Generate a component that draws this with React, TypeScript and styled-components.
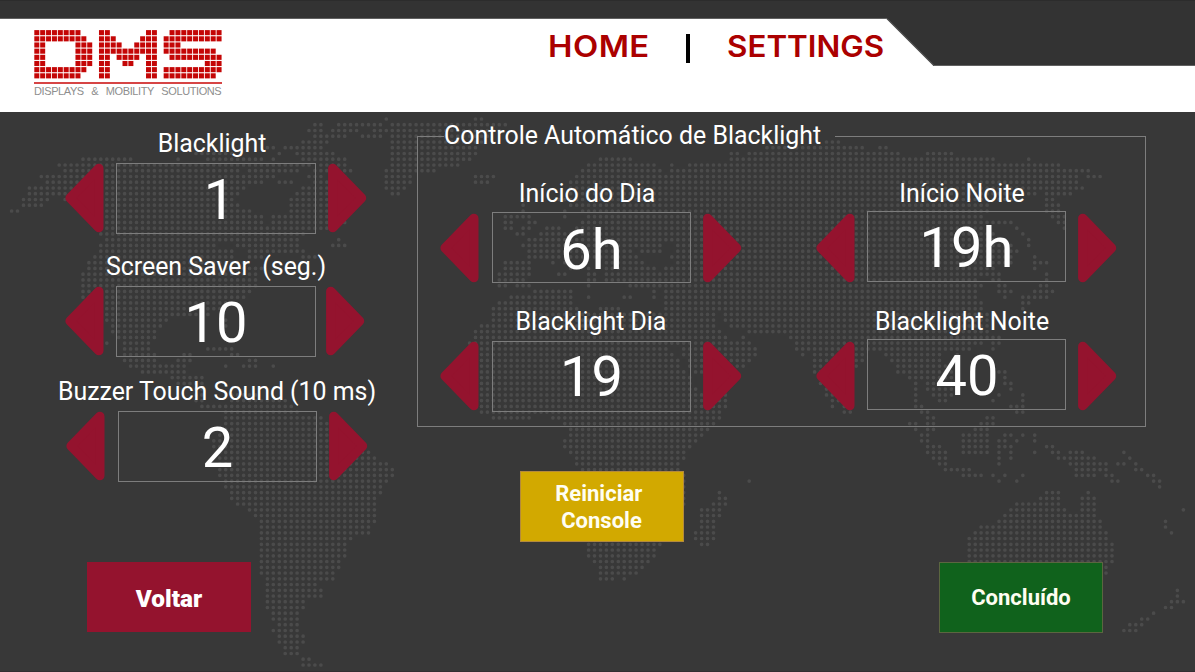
import React from "react";
import styled, { createGlobalStyle } from "styled-components";

const GlobalStyle = createGlobalStyle`
  *, *::before, *::after { box-sizing: border-box; }
  body { margin: 0; background: #383838; }
`;

const crimson = "#94132e";

/* ---------- dotted world map ---------- */

const STEP_X = 5.948;
const STEP_Y = 5.747;
const ORIGIN_X = 11.6;
const ORIGIN_Y = 119;

/* one line per row of dots: "from-to" spans of land, in px */
const LAND = `
387 476-482
315-321 339-381 393-506
309-321 333-357 375-387 393-500
315-345 363-381 393-490
303-327 393-483 826-838
268-273 286-291 297-321 393-477 767-862 880-886
196-232 280 297-333 393-476 733-739 751-898 928-952
83-131 178 208-250 256-261 273 303-345 393-470 602-632 733-993 1028
59-261 268-310 321-345 393-458 590-656 673 691-1058
65-240 250-297 315-351 387-434 584-661 673-1088
41-273 309-321 339-345 387-410 476-494 578-1077 1088-1100
47-261 280-291 315-327 387-410 476-488 572-1077
29-244 303-327 387-404 572-1082
29-240 297-327 393-399 572-1034 1045-1071
23-47 65-234 291-327 523 560-1010 1047-1053
23-35 41 107-238 291-327 523 572-985 1047-1058
12-17 107-250 291-327 523 565 584-985 1047-1058
107-262 273-327 506-529 565 590-981 1053-1064
107-262 273-345 506-512 529-535 584-1012 1058-1064
107-327 506-512 523-529 547-560 578-981 1017 1064
100-303 517-523 541-992 1022
107-297 339 529-999 1028
101-214 238-297 333-345 523-661 679-1010 1028
101-232 250-303 529-632 644-661 679-1017
95-232 250-262 303-315 529-560 572-637 673-1010 1035
89-244 506-529 553 565-570 607-640 679-1011 1035-1047
89-262 506-529 570 589 607-655 668-995 1035
83-256 500-529 560-566 589-595 607-999 1047
83-256 500-523 589-595 607-975 993-999 1047
83-256 500-506 517-530 589 630-981 999-1005 1041-1047
83-250 535-572 656 668-976 999-1011 1035-1053
83-244 512-572 589 626-632 656 668-976 1005 1023-1047
107-226 500-572 668-982 1023-1028
107-220 494-578 602-620 668-982 1023
107-208 494-714 725-987
107-167 226 494-714 725-987
113-161 226 482-714 731-987
113-155 476-720 749-987
119-155 476-727 743 791-999
107 125-149 470-666 672-749 797-982 993-999
125-149 208-232 476-666 684-757 797-970 993
125-155 184-190 232-238 482-672 684-757 802 815-864 886-940 955
125-155 178-190 250-256 482-678 690-751 815-862 892-940 955
131-184 226 244-256 273 482-678 690-745 815-855 898-958
143-184 482-684 696-733 815-850 898-958 999-1005
172-202 482-690 821-850 910-934 940-958 1005
178-202 482-690 821-850 916 928-958 1005-1011
196-202 482-697 826-850 916 928-952 1011
196-202 226-256 482-727 826-845 916 934-952 999 1023
196-202 232-286 482-727 832-850 916 940-946 993 1023
202-291 482-727 832 845-850 916-922 1011-1023
226-297 482-720 844-850 922-928 1017-1023
226-321 494-529 553-720 928-934 987-993
226-327 565-714 910-916 928-934 981-993
226-327 571-708 916 928-934 975-987
220-327 571-702 922-928 963-987 1005-1011 1023 1035
214-345 565-696 922-928 963-987 999-1005 1017 1035
214-363 565-690 928-940 963-987 999-1011 1047-1053
220-369 571-684 928-946 963-987 999 1011 1035 1053-1058 1071-1082 1124
220-375 577-684 934-945 999 1011 1058-1094 1130
220-387 577-678 940-945 999 1071-1106 1118-1124 1136
220-393 583-678 945-969 1077-1106 1136-1142
219-393 583-684 963-981 993 1005 1023 1077-1094 1106-1112 1148-1153
225-387 583-684 749 999 1017 1112-1118 1153-1160
225-381 583-684 1160
231-381 583-684 719 1047-1058 1088
231-375 583-684 719-725 1041-1058 1082-1094
237-375 583-684 713-725 1017-1058 1082-1094
249-375 583-678 701-719 1011-1064 1082-1094 1183
255-375 583-672 701-719 1005-1094
261-375 589-672 701-713 999-1100 1166
261-370 589-672 701-713 981-1100 1166
261-370 589-666 696-713 975-1106 1172
261-352 589-666 696-713 969-1106
261-346 589-660 701-707 969-1112
261-346 589-654 969-1112
261-346 589-654 969-1112
261-340 595-648 969-1112
261-340 601-642 1106
261-334 601-636 1106
267-334 601-613 624
267-316
267-322 1177
267-322 1177
267-304 1172-1183
267-304 1166-1172
273-298 1154
273-298 1142-1148
279-298 1130-1142
273-298 1124-1136
279-304
279-304
285-298
285-298
303-309
303-322`;

const toColumn = (x: number) => Math.round((x - ORIGIN_X) / STEP_X);

const mapPath = LAND.trim()
  .split("\n")
  .map((line, row) => {
    const y = (ORIGIN_Y + row * STEP_Y).toFixed(1);
    return line
      .trim()
      .split(" ")
      .map((span) => {
        const [from, to = from] = span.split("-").map(Number);
        let d = "";
        for (let c = toColumn(from); c <= toColumn(to); c++) {
          d += `M${(ORIGIN_X + c * STEP_X).toFixed(1)} ${y}h0`;
        }
        return d;
      })
      .join("");
  })
  .join("");

const MapSvg = styled.svg`
  position: absolute;
  inset: 0;
  pointer-events: none;
`;

const WorldMap = () => (
  <MapSvg width="1195" height="672" aria-hidden="true">
    <path d={mapPath} stroke="#4b4b4b" strokeWidth="3.7" strokeLinecap="round" fill="none" />
  </MapSvg>
);

/* ---------- header ---------- */

const Screen = styled.div`
  position: relative;
  display: flex;
  flex-direction: column;
  width: 1195px;
  height: 672px;
  overflow: hidden;
  background: #383838;
  border-bottom: 1px solid #332e31;
  font-family: Roboto, "Liberation Sans", sans-serif;
  color: #fff;
`;

const Header = styled.header`
  position: relative;
  display: flex;
  flex: none;
  height: 112px;
  padding-top: 19px;
  background: #fff;
`;

const HeaderShape = styled.svg`
  position: absolute;
  inset: 0;
`;

const Brand = styled.div`
  position: relative;
  display: flex;
  flex-direction: column;
  width: 188px;
  margin: 11px 0 0 34px;
`;

const BrandRule = styled.div`
  height: 1.5px;
  margin-top: 3px;
  background: #d64545;
`;

const BrandTagline = styled.div`
  margin-top: 1px;
  font: 11px/13px "Liberation Sans", Arial, sans-serif;
  letter-spacing: -0.4px;
  word-spacing: 4.9px;
  color: #8e8e8e;
  white-space: nowrap;
`;

const Nav = styled.nav`
  position: relative;
  display: flex;
  align-items: center;
  height: 54px;
  margin-left: 325.5px;
`;

const NavItem = styled.a<{ $width: number; $stretch: number; $spacing: number }>`
  width: ${(p) => p.$width}px;
  font: 600 29.6px/36px Inter, sans-serif;
  letter-spacing: ${(p) => p.$spacing}px;
  color: #ab0000;
  white-space: nowrap;
  transform: scaleX(${(p) => p.$stretch});
  transform-origin: left center;
`;

const NavDivider = styled.span`
  width: 4px;
  height: 29px;
  margin: 5px 37px 0 37.5px;
  background: #000;
`;

const LOGO = [
  "########...##......##..#########",
  "#########..###....###.##########",
  "##.....###.####..####.###.......",
  "##.....###.##########.#########.",
  "##.....###.##.####.##..#########",
  "##.....###.##..##..##........###",
  "#########..##......##.##########",
  "########...##......##.#########.",
];

const LogoMark = () => (
  <svg width="188" height="49" viewBox="0 0 188 49" aria-hidden="true">
    {LOGO.map((line, r) =>
      line.split("").map((cell, c) =>
        cell === "#" ? (
          <rect
            key={`${r}-${c}`}
            x={0.3 + c * 5.88}
            y={0.1 + r * 6.17}
            width="5"
            height="5.1"
            fill="#c40606"
          />
        ) : null
      )
    )}
  </svg>
);

/* ---------- steppers ---------- */

const StepperBox = styled.div<{ $ml: number; $mt: number }>`
  display: flex;
  flex-direction: column;
  align-items: center;
  width: 302px;
  margin-left: ${(p) => p.$ml}px;
  margin-top: ${(p) => p.$mt}px;
`;

const StepperLabel = styled.div<{ $shift: number }>`
  height: 30px;
  line-height: 30px;
  font-size: 24.9px;
  white-space: pre;
  padding-right: ${(p) => Math.max(0, -p.$shift) * 2}px;
`;

const StepperRow = styled.div<{ $space: number }>`
  display: flex;
  align-items: flex-start;
  align-self: flex-start;
  height: 71px;
  margin-top: ${(p) => p.$space}px;
`;

const ArrowButton = styled.button<{ $drop: number }>`
  flex: none;
  width: 39px;
  height: 70px;
  margin: ${(p) => p.$drop}px 0 0;
  padding: 0;
  border: 0;
  background: none;

  svg {
    display: block;
  }
`;

const Value = styled.output<{
  $width: number;
  $rise: number;
  $left: number;
  $right: number;
  $line: number;
  $nudge: number;
}>`
  flex: none;
  width: ${(p) => p.$width}px;
  height: 71px;
  margin: ${(p) => p.$rise}px ${(p) => p.$right}px 0 ${(p) => p.$left}px;
  padding-left: ${(p) => p.$nudge}px;
  border: 1px solid #7d7d7d;
  line-height: ${(p) => p.$line}px;
  font-size: 56px;
  text-align: center;
`;

const Triangle = ({ flip }: { flip?: boolean }) => (
  <svg width="39" height="70" viewBox="0 0 39 70">
    <path
      d={flip ? "M4.7 5.3V64.7L33.6 35Z" : "M33.9 5.3V64.7L5 35Z"}
      fill={crimson}
      stroke={crimson}
      strokeWidth="9.2"
      strokeLinejoin="round"
    />
  </svg>
);

type StepperProps = {
  label: string;
  value: string;
  width?: number;
  left?: number;
  right?: number;
  ml?: number;
  mt?: number;
  shift?: number;
  drop?: number;
  rise?: number;
  space?: number;
  line?: number;
  nudge?: number;
};

const Stepper = ({
  label,
  value,
  width = 199,
  left = 12,
  right = 12,
  ml = 0,
  mt = 0,
  shift = 0,
  drop = 0,
  rise = 0,
  space = 4,
  line = 72,
  nudge = 0,
}: StepperProps) => (
  <StepperBox $ml={ml} $mt={mt}>
    <StepperLabel $shift={shift}>{label}</StepperLabel>
    <StepperRow $space={space}>
      <ArrowButton $drop={drop} aria-label="-">
        <Triangle />
      </ArrowButton>
      <Value $width={width} $rise={rise} $left={left} $right={right} $line={line} $nudge={nudge}>
        {value}
      </Value>
      <ArrowButton $drop={drop} aria-label="+">
        <Triangle flip />
      </ArrowButton>
    </StepperRow>
  </StepperBox>
);

/* ---------- body ---------- */

const Main = styled.main`
  position: relative;
  display: grid;
  grid-template-columns: 417px 729px;
  height: 559px;
`;

const LeftColumn = styled.section`
  padding: 17px 0 0 65px;
`;

const RightColumn = styled.section`
  padding-top: 9px;
`;

const Panel = styled.fieldset`
  display: block;
  height: 306px;
  margin: 0;
  padding: 28px 0 0 22px;
  border: 1px solid #7d7d7d;
`;

const PanelTitle = styled.legend`
  margin-left: 4px;
  padding: 0 14px 0 0;
  height: 30px;
  line-height: 30px;
  font-size: 24.9px;
  white-space: nowrap;
`;

const PanelGrid = styled.div`
  display: grid;
  grid-template-columns: 302px 302px;
  column-gap: 74px;
  row-gap: 24px;
`;

const Actions = styled.div`
  display: flex;
  align-items: flex-start;
  gap: 255px;
  padding: 44px 0 0 103px;
`;

const ActionButton = styled.button<{ $bg: string; $edge: string }>`
  width: 164px;
  height: 71px;
  padding: 0;
  border: 1px solid ${(p) => p.$edge};
  background: ${(p) => p.$bg};
  font: 700 22px/27px Roboto, sans-serif;
  color: #fffef2;
  text-align: center;
  white-space: pre;
`;

const RestartButton = styled(ActionButton)`
  padding-right: 1px;
`;

const BackButton = styled(ActionButton)`
  display: block;
  height: 70px;
  margin: 80px 0 0 22px;
  padding-top: 3px;
  font-size: 24.3px;
  font-weight: 900;
  color: #fff;
`;

const DoneButton = styled(ActionButton)`
  margin-top: 91px;
`;

export default function App() {
  return (
    <>
      <GlobalStyle />
      <Screen>
        <WorldMap />
        <Header>
          <HeaderShape width="1195" height="112" aria-hidden="true">
            <path d="M0 0H1195V66H933.5L886.5 19H0Z" fill="#333" />
            <path d="M0 18.5H887L934 65.5H1195" fill="none" stroke="#666" strokeWidth="0.9" />
            <path d="M0 .5H1195" stroke="#2c2c2c" />
          </HeaderShape>
          <Brand>
            <LogoMark />
            <BrandRule />
            <BrandTagline>DISPLAYS &amp; MOBILITY SOLUTIONS</BrandTagline>
          </Brand>
          <Nav>
            <NavItem $width={101} $stretch={1.11} $spacing={0.4}>
              HOME
            </NavItem>
            <NavDivider />
            <NavItem $width={158} $stretch={1.06} $spacing={0}>
              SETTINGS
            </NavItem>
          </Nav>
        </Header>
        <Main>
          <LeftColumn>
            <Stepper label="Blacklight" value="1" width={200} shift={-4} nudge={7} />
            <Stepper label="Screen Saver  (seg.)" value="10" width={200} mt={18} right={10} />
            <Stepper label="Buzzer Touch Sound (10 ms)" value="2" mt={20} ml={1} left={13} right={12} />
            <BackButton $bg={crimson} $edge={crimson}>
              Voltar
            </BackButton>
          </LeftColumn>
          <RightColumn>
            <Panel>
              <PanelTitle>Controle Automático de Blacklight</PanelTitle>
              <PanelGrid>
                <Stepper label="Início do Dia" value="6h" shift={-4} left={13} space={3} drop={1} line={74} />
                <Stepper label="Início Noite" value="19h" shift={-5} space={3} drop={1} rise={-1} line={73} />
                <Stepper label="Blacklight Dia" value="19" left={13} line={71} />
                <Stepper label="Blacklight Noite" value="40" shift={-5} rise={-2} nudge={1} />
              </PanelGrid>
            </Panel>
            <Actions>
              <RestartButton $bg="#d2a900" $edge="#b48a3c">{"Reiniciar \nConsole"}</RestartButton>
              <DoneButton $bg="#10621c" $edge="#5b6640">Concluído</DoneButton>
            </Actions>
          </RightColumn>
        </Main>
      </Screen>
    </>
  );
}
